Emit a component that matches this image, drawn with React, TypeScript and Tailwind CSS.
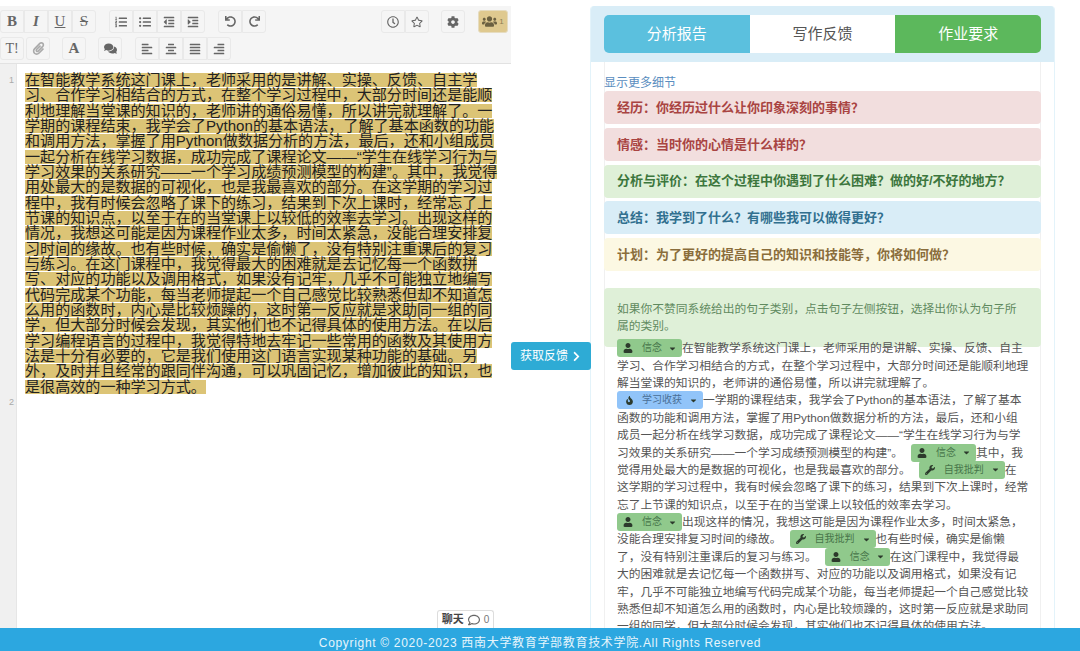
import type { ReactNode } from "react"
import {
  FaAlignCenter,
  FaAlignJustify,
  FaAlignLeft,
  FaAlignRight,
  FaCaretDown,
  FaChevronRight,
  FaCog,
  FaComments,
  FaFire,
  FaIndent,
  FaListOl,
  FaListUl,
  FaOutdent,
  FaPaperclip,
  FaRedo,
  FaRegClock,
  FaRegComment,
  FaRegStar,
  FaUndo,
  FaUser,
  FaUsers,
  FaWrench,
} from "react-icons/fa"

const essayLines = [
  "在智能教学系统这门课上，老师采用的是讲解、实操、反馈、自主学",
  "习、合作学习相结合的方式，在整个学习过程中，大部分时间还是能顺",
  "利地理解当堂课的知识的，老师讲的通俗易懂，所以讲完就理解了。一",
  "学期的课程结束，我学会了Python的基本语法，了解了基本函数的功能",
  "和调用方法，掌握了用Python做数据分析的方法，最后，还和小组成员",
  "一起分析在线学习数据，成功完成了课程论文——“学生在线学习行为与",
  "学习效果的关系研究——一个学习成绩预测模型的构建”。其中，我觉得",
  "用处最大的是数据的可视化，也是我最喜欢的部分。在这学期的学习过",
  "程中，我有时候会忽略了课下的练习，结果到下次上课时，经常忘了上",
  "节课的知识点，以至于在的当堂课上以较低的效率去学习。出现这样的",
  "情况，我想这可能是因为课程作业太多，时间太紧急，没能合理安排复",
  "习时间的缘故。也有些时候，确实是偷懒了，没有特别注重课后的复习",
  "与练习。在这门课程中，我觉得最大的困难就是去记忆每一个函数拼",
  "写、对应的功能以及调用格式，如果没有记牢，几乎不可能独立地编写",
  "代码完成某个功能，每当老师提起一个自己感觉比较熟悉但却不知道怎",
  "么用的函数时，内心是比较烦躁的，这时第一反应就是求助同一组的同",
  "学，但大部分时候会发现，其实他们也不记得具体的使用方法。在以后",
  "学习编程语言的过程中，我觉得特地去牢记一些常用的函数及其使用方",
  "法是十分有必要的，它是我们使用这门语言实现某种功能的基础。另",
  "外，及时并且经常的跟同伴沟通，可以巩固记忆，增加彼此的知识，也",
  "是很高效的一种学习方式。",
]

const prompts = [
  { text: "经历：你经历过什么让你印象深刻的事情？", cls: "bg-[#f2dede] text-[#a94442]" },
  { text: "情感：当时你的心情是什么样的？", cls: "bg-[#f2dede] text-[#a94442]" },
  { text: "分析与评价：在这个过程中你遇到了什么困难？做的好/不好的地方？", cls: "bg-[#dff0d8] text-[#3c763d]" },
  { text: "总结：我学到了什么？有哪些我可以做得更好？", cls: "bg-[#d9edf7] text-[#31708f]" },
  { text: "计划：为了更好的提高自己的知识和技能等，你将如何做？", cls: "bg-[#fcf8e3] text-[#8a6d3b]" },
]

function ToolBtn({ children, className = "" }: { children: ReactNode; className?: string }) {
  return (
    <span
      className={`flex h-[23px] w-[24px] items-center justify-center border border-[#e9e9e9] text-[#666] first:rounded-l-[3px] last:rounded-r-[3px] ${className}`}
    >
      {children}
    </span>
  )
}

function Group({ children }: { children: ReactNode }) {
  return <div className="flex">{children}</div>
}

function Toolbar() {
  const letter = "font-['Liberation_Serif',serif] text-[15px] font-bold"
  return (
    <div className="flex h-[58px] flex-col gap-[4px] border-b border-[#e2e2e2] bg-[#f5f5f5] pt-[4px]">
      <div className="flex items-center pr-[3px]">
        <Group>
          <ToolBtn><span className={letter}>B</span></ToolBtn>
          <ToolBtn><span className={`${letter} italic`}>I</span></ToolBtn>
          <ToolBtn><span className="font-['Liberation_Serif',serif] text-[15px] underline">U</span></ToolBtn>
          <ToolBtn><span className="font-['Liberation_Serif',serif] text-[15px] line-through">S</span></ToolBtn>
        </Group>
        <div className="ml-[13px]">
          <Group>
            <ToolBtn><FaListOl size={12} /></ToolBtn>
            <ToolBtn><FaListUl size={12} /></ToolBtn>
            <ToolBtn><FaOutdent size={12} /></ToolBtn>
            <ToolBtn><FaIndent size={12} /></ToolBtn>
          </Group>
        </div>
        <div className="ml-[13px]">
          <Group>
            <ToolBtn><FaUndo size={11} /></ToolBtn>
            <ToolBtn><FaRedo size={11} /></ToolBtn>
          </Group>
        </div>
        <div className="ml-auto">
          <Group>
            <ToolBtn><FaRegClock size={12} /></ToolBtn>
            <ToolBtn><FaRegStar size={12} /></ToolBtn>
          </Group>
        </div>
        <div className="ml-[12px]">
          <ToolBtn className="rounded-[3px]"><FaCog size={12} /></ToolBtn>
        </div>
        <div className="ml-[13px] flex h-[23px] w-[30px] items-center justify-center gap-[2px] rounded-[3px] border border-[#e6dcc0] bg-[#dfc98f] text-[#6b6040]">
          <FaUsers size={15} />
          <span className="text-[8px] text-[#8d7f55]">1</span>
        </div>
      </div>
      <div className="flex items-center">
        <ToolBtn className="rounded-[3px]">
          <span className="font-['Liberation_Serif',serif] text-[14px]">T!</span>
        </ToolBtn>
        <div className="ml-[2px]">
          <ToolBtn className="rounded-[3px]"><FaPaperclip size={13} className="text-[#aaa]" /></ToolBtn>
        </div>
        <div className="ml-[12px]">
          <ToolBtn className="rounded-[3px]"><span className={letter}>A</span></ToolBtn>
        </div>
        <div className="ml-[12px]">
          <ToolBtn className="rounded-[3px]"><FaComments size={13} /></ToolBtn>
        </div>
        <div className="ml-[13px]">
          <Group>
            <ToolBtn><FaAlignLeft size={12} /></ToolBtn>
            <ToolBtn><FaAlignCenter size={12} /></ToolBtn>
            <ToolBtn><FaAlignJustify size={12} /></ToolBtn>
            <ToolBtn><FaAlignRight size={12} /></ToolBtn>
          </Group>
        </div>
      </div>
    </div>
  )
}

function Editor() {
  return (
    <div className="relative flex min-h-0 flex-1">
      <div className="flex w-[17px] shrink-0 flex-col border-r border-[#e6e6e6] bg-[#f0f0f0] pl-[9px] pt-[10px] text-[9px] text-[#aaa]">
        <span className="h-[322px]">1</span>
        <span>2</span>
      </div>
      <div className="flex-1 pl-[8px] pt-[9px] text-[15.08px] text-[#222]">
        {essayLines.map((line) => (
          <div key={line} className="mb-[1.33px] h-[14px] w-fit whitespace-nowrap bg-[#dcc476] leading-[14px]">
            {line}
          </div>
        ))}
      </div>
      <div className="absolute bottom-0 right-[17px] flex h-[18px] w-[57px] items-center justify-center gap-[4px] rounded-t-[3px] border border-b-0 border-[#ddd] bg-white text-[11px]">
        <span className="font-bold text-[#444]">聊天</span>
        <FaRegComment size={12} className="text-[#666]" />
        <span className="text-[10px] text-[#777]">0</span>
      </div>
    </div>
  )
}

function Tag({ label, kind }: { label: string; kind: "belief" | "gain" | "critic" }) {
  const wide = kind !== "belief"
  const bg = kind === "gain" ? "bg-[#91c4f9]" : "bg-[#90c98c]"
  const color = kind === "gain" ? "text-[#4a6f96]" : "text-[#47754a]"
  return (
    <span
      className={`inline-flex h-[18px] items-center rounded-[3px] pl-[5px] pr-[5px] align-top text-[10px] leading-none ${bg} ${color} ${wide ? "w-[86px]" : "w-[65px]"}`}
    >
      <span className="flex w-[20px] shrink-0 justify-start pl-[1px] text-[#2c3a2c]">
        {kind === "belief" && <FaUser size={10} />}
        {kind === "gain" && <FaFire size={9} className="ml-[2px]" />}
        {kind === "critic" && <FaWrench size={10} />}
      </span>
      <span className="flex-1">{label}</span>
      <FaCaretDown size={9} className="text-[#2c3a2c]" />
    </span>
  )
}

function FeedbackText() {
  const row = "h-[17.4px] whitespace-nowrap leading-[17.4px]"
  return (
    <div className="relative mt-[-8px] text-[11.75px] text-[#555]">
      <div className={row}><Tag label="信念" kind="belief" />在智能教学系统这门课上，老师采用的是讲解、实操、反馈、自主</div>
      <div className={row}>学习、合作学习相结合的方式，在整个学习过程中，大部分时间还是能顺利地理</div>
      <div className={row}>解当堂课的知识的，老师讲的通俗易懂，所以讲完就理解了。</div>
      <div className={row}><Tag label="学习收获" kind="gain" />一学期的课程结束，我学会了Python的基本语法，了解了基本</div>
      <div className={row}>函数的功能和调用方法，掌握了用Python做数据分析的方法，最后，还和小组</div>
      <div className={row}>成员一起分析在线学习数据，成功完成了课程论文——“学生在线学习行为与学</div>
      <div className={row}>习效果的关系研究——一个学习成绩预测模型的构建”。<span className="ml-[8px] align-top"><Tag label="信念" kind="belief" /></span>其中，我</div>
      <div className={row}>觉得用处最大的是数据的可视化，也是我最喜欢的部分。<span className="ml-[8px] align-top"><Tag label="自我批判" kind="critic" /></span>在</div>
      <div className={row}>这学期的学习过程中，我有时候会忽略了课下的练习，结果到下次上课时，经常</div>
      <div className={row}>忘了上节课的知识点，以至于在的当堂课上以较低的效率去学习。</div>
      <div className={row}><Tag label="信念" kind="belief" />出现这样的情况，我想这可能是因为课程作业太多，时间太紧急，</div>
      <div className={row}>没能合理安排复习时间的缘故。<span className="ml-[8px] align-top"><Tag label="自我批判" kind="critic" /></span>也有些时候，确实是偷懒</div>
      <div className={row}>了，没有特别注重课后的复习与练习。<span className="ml-[8px] align-top"><Tag label="信念" kind="belief" /></span>在这门课程中，我觉得最</div>
      <div className={row}>大的困难就是去记忆每一个函数拼写、对应的功能以及调用格式，如果没有记</div>
      <div className={row}>牢，几乎不可能独立地编写代码完成某个功能，每当老师提起一个自己感觉比较</div>
      <div className={row}>熟悉但却不知道怎么用的函数时，内心是比较烦躁的，这时第一反应就是求助同</div>
      <div className={row}>一组的同学，但大部分时候会发现，其实他们也不记得具体的使用方法。</div>
    </div>
  )
}

function ReportPanel() {
  return (
    <div className="mb-[-40px] ml-[-1px] flex w-[465px] shrink-0 flex-col overflow-hidden rounded-t-[4px] border-x border-[#e3f3fa]">
      <div className="flex h-[56px] shrink-0 items-center justify-center bg-[#d9edf7]">
        <div className="flex h-[38px] w-[437px] overflow-hidden rounded-[5px] text-[15px]">
          <span className="flex flex-1 items-center justify-center bg-[#5bc0de] text-white">分析报告</span>
          <span className="flex flex-1 items-center justify-center bg-white text-[#555]">写作反馈</span>
          <span className="flex flex-1 items-center justify-center bg-[#5cb85c] text-white">作业要求</span>
        </div>
      </div>
      <div className="mx-[13px] flex-1 border-x border-[#f0f0f0]">
        <p className="-mx-px mt-[13px] h-[16px] text-[12px] leading-[16px] text-[#5a8ec0]">显示更多细节</p>
        <div className="-mx-px flex flex-col gap-[3.8px]">
          {prompts.map((p) => (
            <div key={p.text} className={`flex h-[33px] items-center rounded-[4px] pl-[13px] text-[13px] font-bold ${p.cls}`}>
              {p.text}
            </div>
          ))}
        </div>
        <div className="-mx-px mt-[17px] h-[59px] rounded-[4px] bg-[#dff0d8] px-[13px] pt-[12px] text-[11.75px] leading-[17px] text-[#5f8a5f]">
          如果你不赞同系统给出的句子类别，点击句子左侧按钮，选择出你认为句子所属的类别。
        </div>
        <div className="px-[12px]">
          <FeedbackText />
        </div>
      </div>
    </div>
  )
}

export default function App() {
  return (
    <div className="flex h-[651px] w-[1080px] flex-col overflow-hidden bg-white font-['Liberation_Sans','Noto_Sans_CJK_SC',sans-serif]">
      <div className="flex min-h-0 flex-1 pt-[6px]">
        <div className="flex w-[511px] shrink-0 flex-col">
          <Toolbar />
          <Editor />
        </div>
        <div className="w-[80px] shrink-0 pt-[336px]">
          <button
            type="button"
            className="relative flex h-[28px] w-[80px] items-center justify-center gap-[3px] rounded-[3px] bg-[#2eabd5] text-[12px] text-white"
          >
            获取反馈
            <FaChevronRight size={11} />
          </button>
        </div>
        <ReportPanel />
      </div>
      <footer className="relative h-[23px] shrink-0 bg-[#2ca7e0] pt-[7px] text-center text-[12px] leading-[17px] tracking-[0.68px] text-[#e6f5fc]">
        Copyright © 2020-2023 西南大学教育学部教育技术学院.All Rights Reserved
      </footer>
    </div>
  )
}
